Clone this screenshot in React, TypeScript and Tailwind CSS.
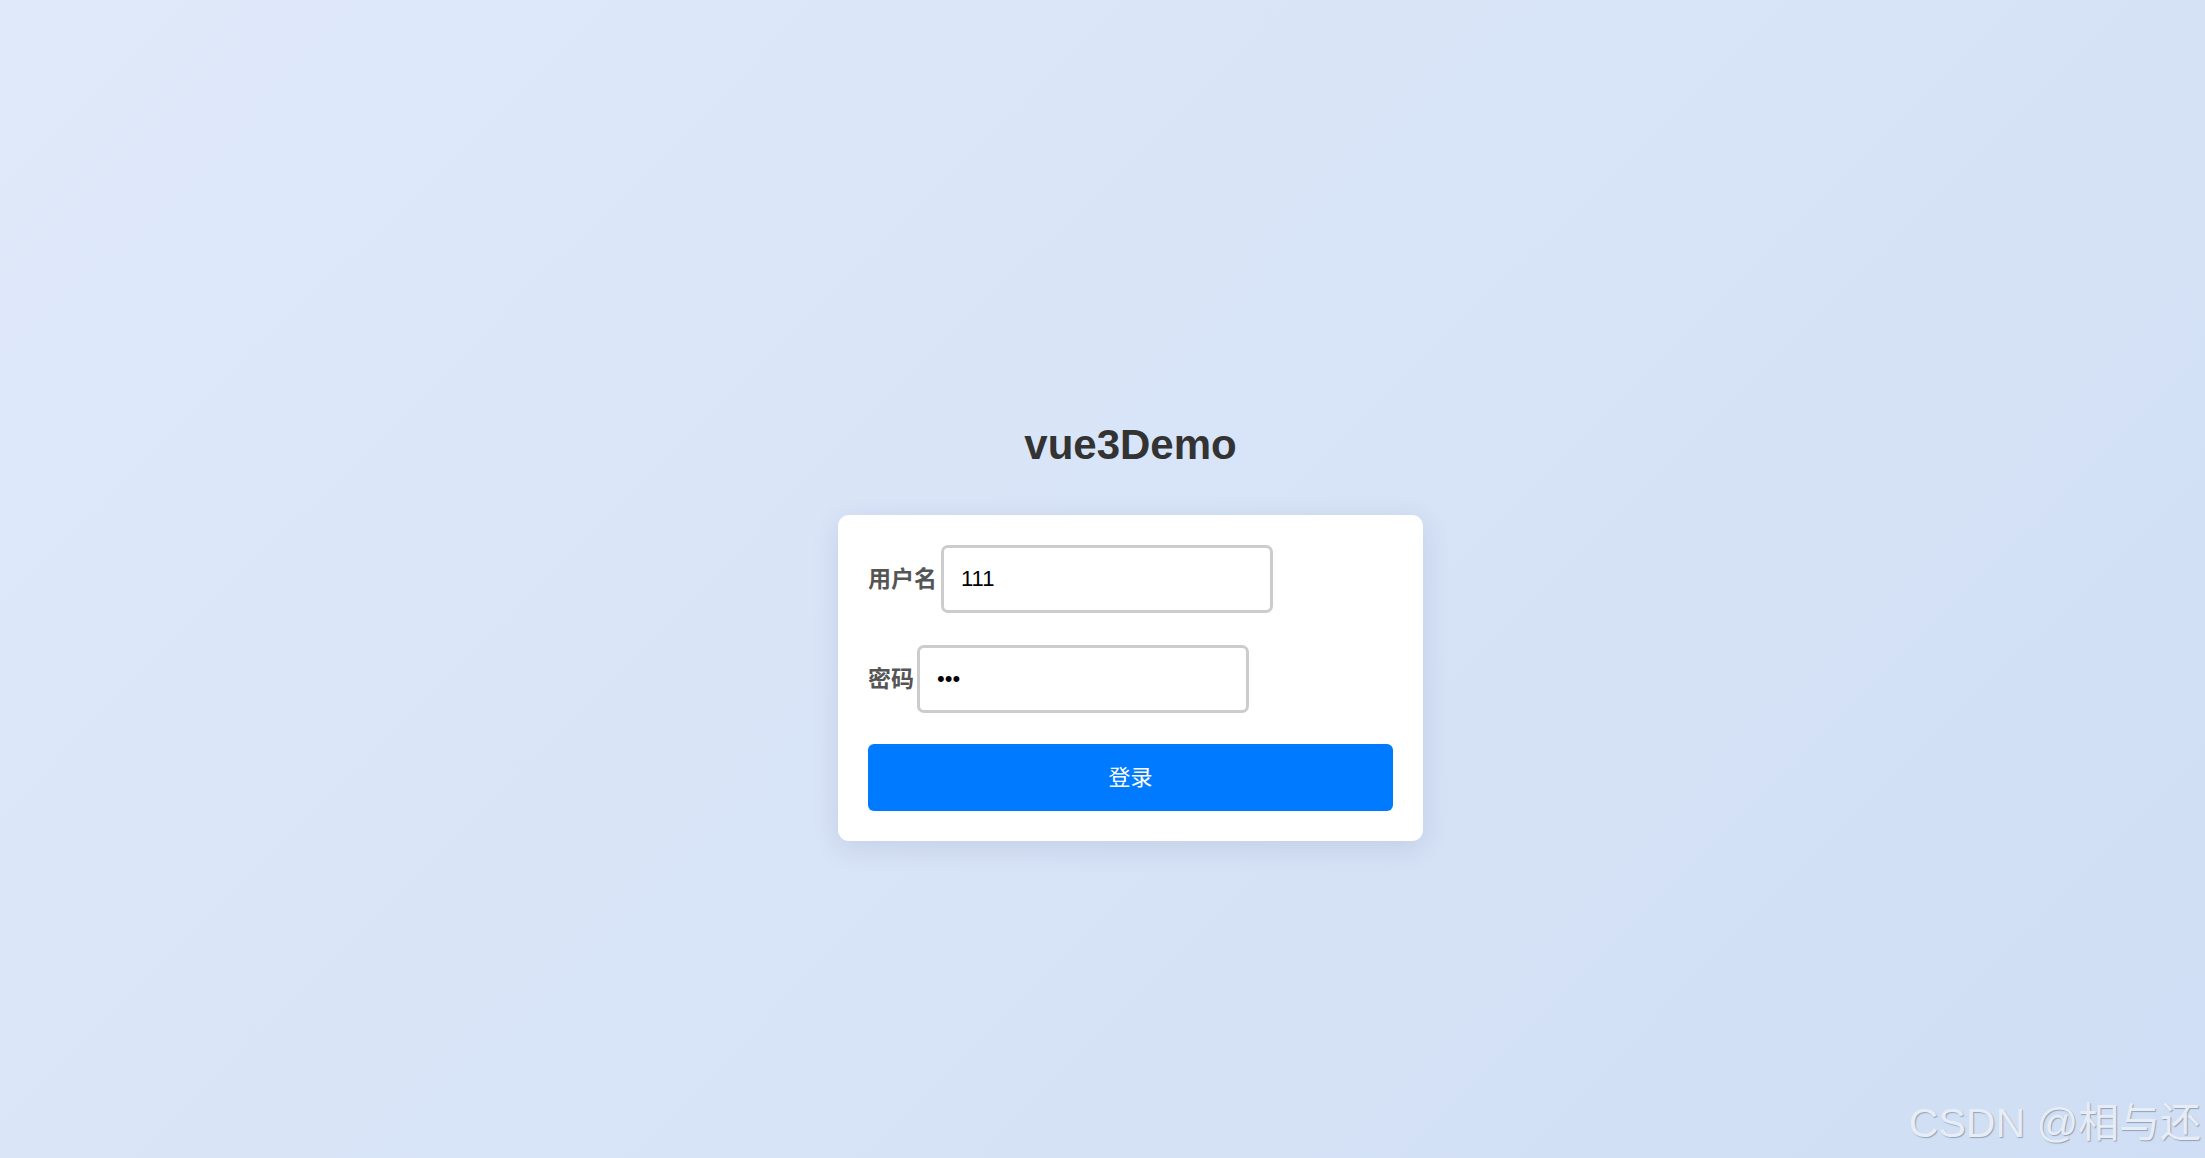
import React from "react";

export default function App() {
  return (
    <div
      className="relative min-h-screen w-full overflow-hidden bg-[linear-gradient(135deg,#dfe9fa_0%,#d8e4f7_50%,#cfdef4_100%)]"
      style={{ fontFamily: '"Liberation Sans", "Noto Sans CJK SC", Arial, sans-serif' }}
    >
      <div className="flex flex-col items-center pl-[56px] pt-[421px]">
        <h1 className="m-0 text-[42px] leading-[48px] font-bold text-[#333333]">vue3Demo</h1>
        <div className="mt-[46px] flex w-[585px] flex-col rounded-[11px] bg-white p-[30px] shadow-[0_6px_28px_rgba(40,60,110,0.12)]">
          <div className="flex items-center gap-[4px]">
            <label className="text-[23px] font-bold text-[#555555] leading-none">用户名</label>
            <input
              readOnly
              value="111"
              className="h-[68px] w-[332px] rounded-[7px] border-[3px] border-[#cccccc] bg-white px-[17px] text-[22px] text-black outline-none"
              style={{ fontFamily: '"Liberation Sans", Arial, sans-serif' }}
            />
          </div>
          <div className="mt-[32px] flex items-center gap-[3px]">
            <label className="text-[23px] font-bold text-[#555555] leading-none">密码</label>
            <input
              readOnly
              type="password"
              value="111"
              className="h-[68px] w-[332px] rounded-[7px] border-[3px] border-[#cccccc] bg-white px-[17px] text-[22px] text-black outline-none"
              style={{ fontFamily: '"Liberation Sans", Arial, sans-serif' }}
            />
          </div>
          <button className="mt-[31px] flex h-[67px] w-full items-center justify-center rounded-[6px] bg-[#007bff] text-[22px] text-white">
            登录
          </button>
        </div>
      </div>
      <div className="absolute bottom-[14px] right-[4px] text-[41px] leading-none text-[#e6edf7] [text-shadow:1px_1px_1px_rgba(110,120,140,0.6)]">
        CSDN @相与还
      </div>
    </div>
  );
}
